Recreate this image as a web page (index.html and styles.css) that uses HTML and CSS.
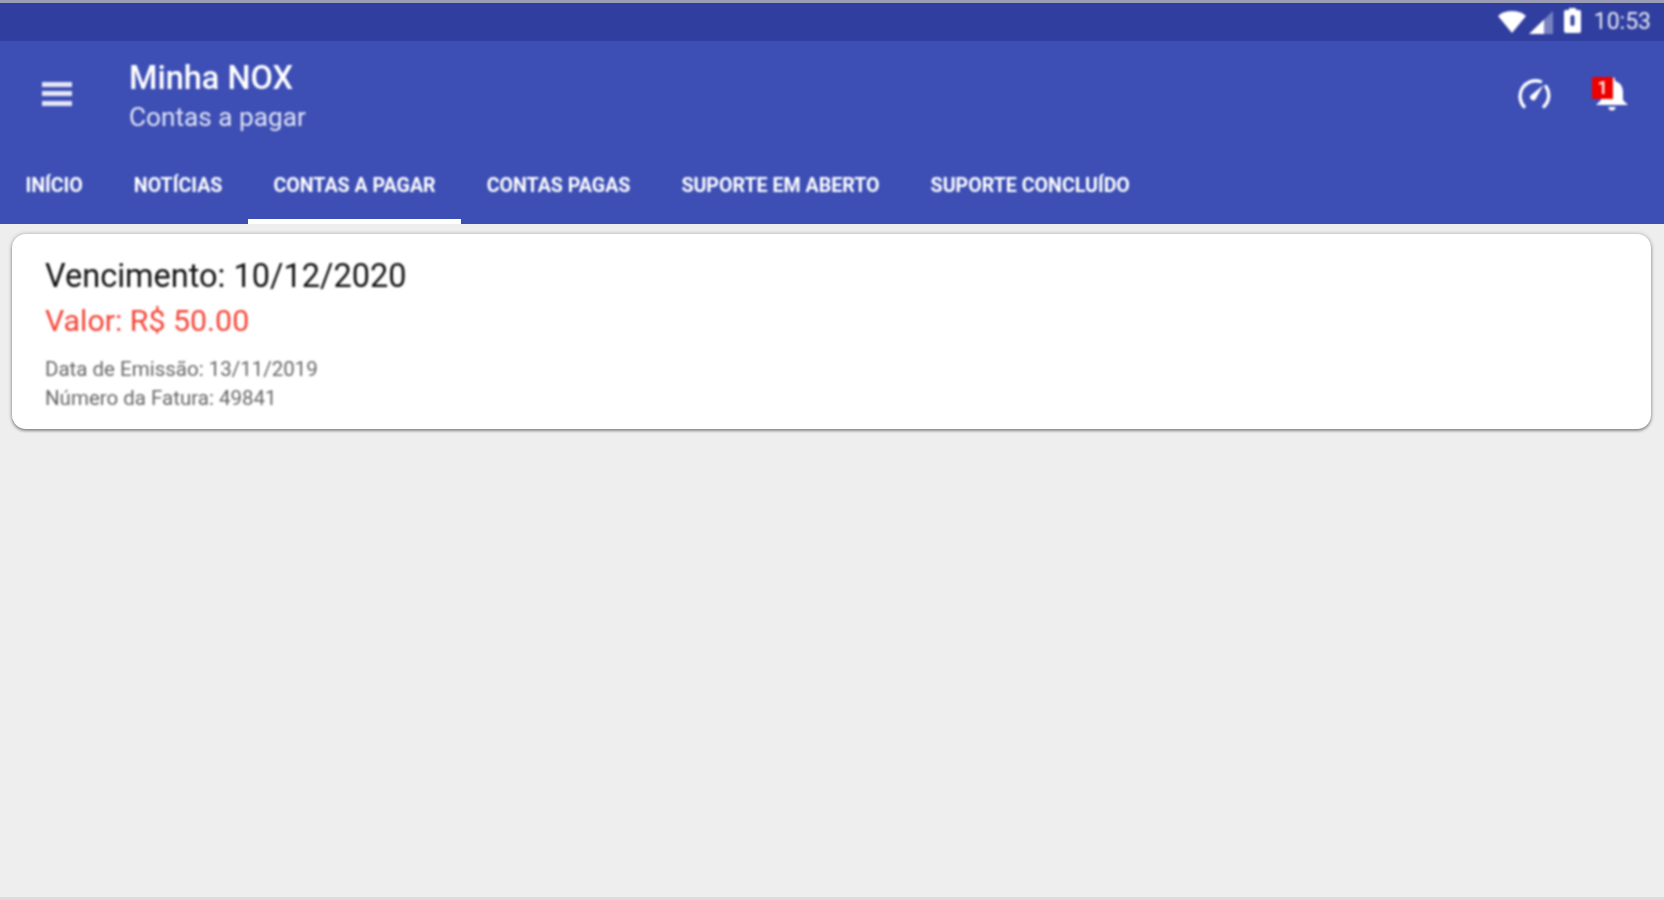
FILE: index.html
```html
<!DOCTYPE html>
<html lang="pt">
<head>
<meta charset="utf-8">
<title>Minha NOX</title>
<link rel="stylesheet" href="styles.css">
</head>
<body>
<div class="screen">
  <div class="topline"></div>
  <div class="statusbar">
    <svg class="st-wifi soft" viewBox="0 0 28 22"><path d="M0 5C3.500 1.800 8.500 0 14 0s10.500 1.800 14 5L14 22z" fill="#fff"/></svg>
    <svg class="st-signal soft" viewBox="0 0 24 23"><path d="M24 0v23H0z" fill="#fff" opacity=".35"/><path d="M15 8.500V23H0z" fill="#fff"/></svg>
    <svg class="st-batt soft" viewBox="0 0 17 25"><path d="M5 0h7v2h3a2 2 0 0 1 2 2v19a2 2 0 0 1-2 2H2a2 2 0 0 1-2-2V4a2 2 0 0 1 2-2h3z" fill="#fff"/><rect x="6.500" y="7" width="4" height="11" rx="2" fill="#303f9f"/></svg>
    <span class="clock soft">10:53</span>
  </div>
  <header class="appbar">
    <div class="toolbar">
      <button class="menu soft" aria-label="Menu"><span></span><span></span><span></span></button>
      <div class="titles soft">
        <div class="title">Minha NOX</div>
        <div class="subtitle">Contas a pagar</div>
      </div>
      <div class="actions soft">
        <svg class="gauge" viewBox="0 0 36 32"><path d="M8 29.500A15.500 15.500 0 0 1 24.500 4.500M30 9.500A15.500 15.500 0 0 1 28 29.500" fill="none" stroke="#fff" stroke-width="3.400" stroke-linecap="round"/><path d="M27.500 8 19.500 22.500a3.400 3.400 0 0 1-5.500-3.500z" fill="#fff"/></svg>
        <div class="bell">
          <svg viewBox="0 0 36 36"><path d="M18 2a3 3 0 0 1 3 3v1c5.500 1.500 8 6 8 11v8l5 5H2l5-5v-8c0-5 2.500-9.500 8-11V5a3 3 0 0 1 3-3zM14.500 32h7a3.500 3.500 0 0 1-7 0z" fill="#fff"/></svg>
          <span class="badge">1</span>
        </div>
      </div>
    </div>
    <nav class="tabs">
      <a class="tab"><span class="soft">Início</span></a>
      <a class="tab"><span class="soft">Notícias</span></a>
      <a class="tab active"><span class="soft">Contas a pagar</span></a>
      <a class="tab"><span class="soft">Contas pagas</span></a>
      <a class="tab"><span class="soft">Suporte em aberto</span></a>
      <a class="tab"><span class="soft">Suporte concluído</span></a>
    </nav>
  </header>
  <main class="content">
    <article class="card">
      <div class="soft">
        <div class="due">Vencimento: 10/12/2020</div>
        <div class="value">Valor: R$ 50.00</div>
        <div class="meta">Data de Emissão: 13/11/2019</div>
        <div class="meta">Número da Fatura: 49841</div>
      </div>
    </article>
  </main>
  <div class="bottomline"></div>
</div>
</body>
</html>
```
FILE: styles.css
```css
* { box-sizing: border-box; }
html, body { margin: 0; height: 100%; overflow: hidden; }
body { font-family: Roboto, "Liberation Sans", sans-serif; background: #eeeeee; }
.screen { height: 900px; display: flex; flex-direction: column; }
.soft { filter: blur(.8px); }
.topline { height: 3px; background: #9a9db5; }
.statusbar { height: 38px; background: #303f9f; display: flex; align-items: center; justify-content: flex-end; padding-right: 13px; color: #e8e9f5; }
.st-wifi { width: 28px; height: 22px; margin-top: -1px; }
.st-signal { width: 24px; height: 23px; margin-left: 3px; }
.st-batt { width: 17px; height: 25px; margin-left: 11px; margin-top: -4px; }
.clock { font-size: 23px; margin-left: 13px; margin-top: -2px; }
.appbar { height: 183px; background: #3d4fb5; display: flex; flex-direction: column; }
.toolbar { height: 106px; display: flex; align-items: center; }
.menu { width: 30px; height: 24px; margin: -1px 0 0 42px; padding: 0; border: 0; background: none; display: flex; flex-direction: column; justify-content: space-between; }
.menu span { display: block; height: 5px; background: #e4e6f5; }
.titles { margin-left: 57px; margin-top: 5px; color: #fff; }
.title { font-size: 32.500px; font-weight: 500; line-height: 36px; }
.subtitle { font-size: 26.200px; line-height: 34px; margin-top: 4px; color: #e2e4f4; }
.actions { display: flex; align-items: center; margin: -3px 34px 0 auto; gap: 42px; }
.gauge { width: 36px; height: 32px; }
.bell { position: relative; width: 36px; height: 36px; }
.bell svg { width: 36px; height: 36px; display: block; }
.badge { position: absolute; left: -2px; top: 2px; width: 21px; height: 22px; background: #ee0000; color: #fff; font-size: 18px; font-weight: 500; line-height: 22px; text-align: center; }
.tabs { height: 77px; display: flex; }
.tab { display: flex; align-items: center; padding: 0 25.500px; color: #fff; font-size: 19.600px; font-weight: 700; text-transform: uppercase; white-space: nowrap; }
.tab.active { border-bottom: 5px solid #fff; padding-top: 5px; }
.content { flex: 1; padding: 10px 13px 0 12px; }
.card { height: 195px; background: #fff; border-radius: 14px; padding: 22px 33px; box-shadow: 0 2px 3px rgba(0,0,0,.34), 0 0 4px rgba(0,0,0,.28); }
.due { font-size: 32.500px; line-height: 40px; color: #111; }
.value { font-size: 30.300px; line-height: 40px; margin-top: 5px; color: #f44336; }
.meta { font-size: 20.500px; line-height: 29px; color: #666; }
.value + .meta { margin-top: 14px; }
.bottomline { height: 3px; background: #dcdcdc; }
```
